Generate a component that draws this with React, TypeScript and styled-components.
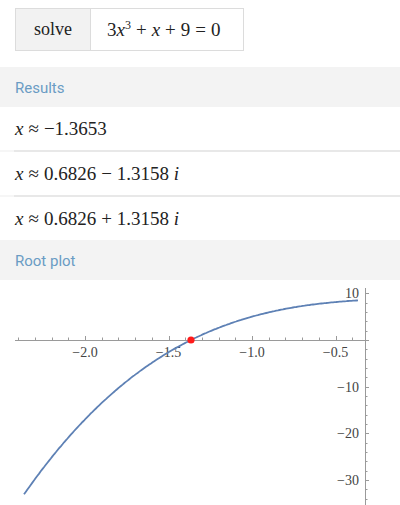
import styled, { createGlobalStyle } from "styled-components";

const GlobalStyle = createGlobalStyle`
  body {
    margin: 0;
    background: #ffffff;
    font-family: "Liberation Serif", "DejaVu Serif", serif;
  }
`;

const Page = styled.div`
  width: 400px;
  height: 505px;
  overflow: hidden;
  display: flex;
  flex-direction: column;
`;

const InputBar = styled.div`
  padding: 8px 15px 16px;
  display: flex;
`;

const InputBox = styled.div`
  display: flex;
  height: 41px;
  border: 1px solid #dcdcdc;
`;

const Command = styled.div`
  width: 74px;
  background: #f2f2f2;
  border-right: 1px solid #dcdcdc;
  display: flex;
  align-items: center;
  justify-content: center;
  font-size: 18px;
  color: #222;
`;

const Expression = styled.div`
  width: 152px;
  display: flex;
  align-items: center;
  padding-left: 16px;
  box-sizing: border-box;
  font-size: 19px;
  color: #222;
`;

const SectionTitle = styled.div`
  height: 40px;
  background: #f3f3f3;
  display: flex;
  align-items: center;
  padding-left: 15px;
  padding-top: 2px;
  box-sizing: border-box;
  font-family: Roboto, "Noto Sans", sans-serif;
  font-size: 15px;
  color: #6a9cc4;
`;

const ResultRow = styled.div`
  height: 43px;
  display: flex;
  align-items: center;
  padding-left: 15px;
  font-size: 19px;
  color: #222;
`;

const Separator = styled.div`
  height: 2px;
  background: #f6f6f6;
  display: flex;

  &::after {
    content: "";
    flex: 1;
    margin-left: 14px;
    background: #e8e8e8;
  }
`;

const Var = styled.i`
  font-style: italic;
`;

const Sup = styled.sup`
  font-size: 12px;
  vertical-align: 7px;
  line-height: 0;
`;

const Op = styled.span`
  margin: 0 5px;
`;

const Plot = styled.svg`
  display: block;
  flex: 1;
`;

// plot mapping
const X0 = 419;
const SX = 167;
const Y0 = 60;
const SY = 4.67;
const px = (x: number) => X0 + SX * x;
const py = (y: number) => Y0 - SY * y;
const f = (x: number) => 3 * x * x * x + x + 9;

const curvePoints = (() => {
  const pts: string[] = [];
  for (let x = -2.365; x <= -0.36; x += 0.01) {
    pts.push(`${px(x).toFixed(1)},${py(f(x)).toFixed(1)}`);
  }
  return pts.join(" ");
})();

const AXIS_X = 365;

const RootPlot = () => {
  const xTicks: number[] = [];
  for (let i = -24; i <= -4; i++) xTicks.push(i / 10);
  const yTicks: number[] = [];
  for (let v = 10; v >= -46; v -= 2) yTicks.push(v);

  return (
    <Plot width="400" height="225" viewBox="0 0 400 225">
      <g stroke="#9a9a9a" strokeWidth="1">
        <line x1="15" y1={Y0 + 0.5} x2={AXIS_X} y2={Y0 + 0.5} />
        <line x1={AXIS_X + 0.5} y1="8" x2={AXIS_X + 0.5} y2="225" />
        {xTicks.map((t) => {
          const major = Math.abs(t * 10) % 5 === 0;
          const x = Math.round(px(t)) + 0.5;
          return <line key={t} x1={x} y1={Y0} x2={x} y2={Y0 - (major ? 4 : 2.5)} />;
        })}
        {yTicks.map((t) => {
          const major = t % 10 === 0;
          const y = Math.round(py(t)) + 0.5;
          return <line key={t} x1={AXIS_X} y1={y} x2={AXIS_X + (major ? 4 : 2.5)} y2={y} />;
        })}
      </g>
      <g
        fill="#444"
        fontFamily="'Liberation Serif', 'DejaVu Serif', serif"
        fontSize="14"
      >
        {[-2.0, -1.5, -1.0, -0.5].map((t) => (
          <text key={t} x={px(t)} y={Y0 + 17} textAnchor="middle">
            {"\u2212" + Math.abs(t).toFixed(1)}
          </text>
        ))}
        {[10, -10, -20, -30].map((t) => (
          <text key={t} x={AXIS_X - 6} y={py(t) + 5} textAnchor="end">
            {t < 0 ? "\u2212" + Math.abs(t) : t}
          </text>
        ))}
      </g>
      <polyline
        points={curvePoints}
        fill="none"
        stroke="#5e81b5"
        strokeWidth="1.8"
      />
      <circle cx={px(-1.3653)} cy={Y0} r="3.6" fill="#ff1a1a" />
    </Plot>
  );
};

export default function App() {
  return (
    <>
      <GlobalStyle />
      <Page>
        <InputBar>
          <InputBox>
            <Command>solve</Command>
            <Expression>
              <span>
                3<Var>x</Var>
                <Sup>3</Sup>
                <Op>+</Op>
                <Var>x</Var>
                <Op>+</Op>9<Op>=</Op>0
              </span>
            </Expression>
          </InputBox>
        </InputBar>
        <SectionTitle>Results</SectionTitle>
        <ResultRow>
          <span>
            <Var>x</Var>
            <Op>≈</Op>−1.3653
          </span>
        </ResultRow>
        <Separator />
        <ResultRow>
          <span>
            <Var>x</Var>
            <Op>≈</Op>0.6826<Op>−</Op>1.3158 <Var>i</Var>
          </span>
        </ResultRow>
        <Separator />
        <ResultRow>
          <span>
            <Var>x</Var>
            <Op>≈</Op>0.6826<Op>+</Op>1.3158 <Var>i</Var>
          </span>
        </ResultRow>
        <SectionTitle>Root plot</SectionTitle>
        <RootPlot />
      </Page>
    </>
  );
}
